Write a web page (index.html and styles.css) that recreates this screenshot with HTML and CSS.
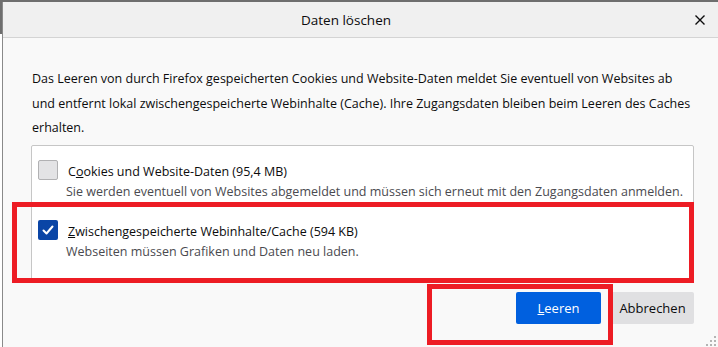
FILE: index.html
```html
<!DOCTYPE html>
<html lang="de">
<head>
    <meta charset="UTF-8">
    <meta name="viewport" content="width=device-width, initial-scale=1.0">
    <title>Daten löschen</title>
    <link rel="stylesheet" href="styles.css">
</head>
<body>

    <div class="screen">
        <!-- page behind the dialog -->
        <div class="behind"></div>

        <div class="dialog">
            <header class="titlebar">
                <span class="title">Daten löschen</span>
                <button class="close" aria-label="Schließen">
                    <svg width="10" height="10" viewBox="0 0 10 10"><path d="M0.5 0.5 L9.5 9.5 M9.5 0.5 L0.5 9.5" stroke="#0c0c0d" stroke-width="1.4" fill="none"/></svg>
                </button>
            </header>

            <div class="content">
                <p class="intro">Das Leeren von durch Firefox gespeicherten Cookies und Website-Daten meldet Sie eventuell von Websites ab<br>und entfernt lokal zwischengespeicherte Webinhalte (Cache). Ihre Zugangsdaten bleiben beim Leeren des Caches<br>erhalten.</p>

                <!-- Options -->
                <div class="listbox">
                    <div class="option">
                        <span class="checkbox"></span>
                        <div class="option-text">
                            <div class="label">C<u>o</u>okies und Website-Daten (95,4 MB)</div>
                            <div class="desc">Sie werden eventuell von Websites abgemeldet und müssen sich erneut mit den Zugangsdaten anmelden.</div>
                        </div>
                    </div>
                    <div class="option">
                        <span class="checkbox checked">
                            <svg width="20" height="20" viewBox="0 0 20 20"><path d="M5.5 10.5 L8.5 13.5 L14.5 6.5" stroke="#fff" stroke-width="2" fill="none" stroke-linecap="round" stroke-linejoin="round"/></svg>
                        </span>
                        <div class="option-text">
                            <div class="label"><u>Z</u>wischengespeicherte Webinhalte/Cache (594 KB)</div>
                            <div class="desc">Webseiten müssen Grafiken und Daten neu laden.</div>
                        </div>
                    </div>
                </div>

                <div class="actions">
                    <button class="btn primary"><u>L</u>eeren</button>
                    <button class="btn">Abbrechen</button>
                </div>
            </div>

            <svg class="grip" width="10" height="10" viewBox="0 0 10 10">
                <rect x="8" y="0" width="2" height="2" fill="#b4b4b4"/>
                <rect x="4" y="4" width="2" height="2" fill="#b4b4b4"/>
                <rect x="8" y="4" width="2" height="2" fill="#b4b4b4"/>
                <rect x="0" y="8" width="2" height="2" fill="#b4b4b4"/>
                <rect x="4" y="8" width="2" height="2" fill="#b4b4b4"/>
                <rect x="8" y="8" width="2" height="2" fill="#b4b4b4"/>
            </svg>
        </div>

        <!-- red annotation frames -->
        <div class="mark mark-option"></div>
        <div class="mark mark-button"></div>
    </div>

</body>
</html>
```

FILE: styles.css
```css
body {
    margin: 0;
    background-color: #fff;
    font-family: "Open Sans", "Noto Sans", sans-serif;
    color: #0c0c0d;
    overflow: hidden;
}
.screen {
    position: relative;
    display: flex;
    width: 718px;
    height: 347px;
    background-color: #6e6e6e;
}
.behind {
    width: 2px;
    background: linear-gradient(#6e6e6e 0, #6e6e6e 34px, #fff 34px);
}
.dialog {
    position: relative;
    flex: 1;
    min-width: 0;
    display: flex;
    flex-direction: column;
    margin-top: 2px;
    border-left: 1px solid #8a8a8a;
    background-color: #f9f9f9;
}
.titlebar {
    display: flex;
    align-items: center;
    height: 35px;
    background-color: #f0f0f0;
    border-bottom: 1px solid #d4d4d4;
}
.title {
    flex: 1;
    text-align: center;
    font-size: 13.5px;
}
.close {
    width: 29px;
    height: 35px;
    padding: 0 0 0 6px;
    border: none;
    background: none;
    text-align: left;
    display: flex;
    align-items: center;
}
.content {
    padding: 0 24px 0 28px;
}
.intro {
    margin: 29px 0 4px 1px;
    font-size: 12.5px;
    line-height: 24.5px;
    white-space: nowrap;
}
.listbox {
    height: 134px;
    background-color: #fff;
    border: 1px solid #c6c6c6;
    border-radius: 2px;
}
.option {
    display: flex;
    gap: 8px;
    padding: 14px 0 4px 6px;
}
.checkbox {
    flex: none;
    width: 18px;
    height: 18px;
    border: 1px solid #b1b1b3;
    border-radius: 2px;
    background-color: #e3e3e5;
}
.checkbox.checked {
    width: 20px;
    height: 20px;
    border: none;
    background-color: #0a45a6;
}
.checkbox svg {
    display: block;
}
.label {
    font-size: 12.5px;
    line-height: 20px;
    padding-top: 2px;
    margin-left: 2px;
}
.desc {
    font-size: 12.5px;
    line-height: 20px;
    color: #4a4a4f;
    white-space: nowrap;
}
.actions {
    display: flex;
    justify-content: flex-end;
    gap: 10px;
    margin-top: 11px;
}
.btn {
    height: 32px;
    min-width: 83px;
    padding: 0 8px;
    border: none;
    border-radius: 2px;
    background-color: #e0e0e2;
    color: #0c0c0d;
    font-family: inherit;
    font-size: 13px;
}
.btn.primary {
    width: 85px;
    background-color: #0060df;
    color: #fff;
}
.grip {
    position: absolute;
    right: 2px;
    bottom: 1px;
}
.mark {
    position: absolute;
    border: 5px solid #ed1c24;
}
.mark-option {
    left: 12px;
    top: 202px;
    width: 672px;
    height: 71px;
}
.mark-button {
    left: 427px;
    top: 284px;
    width: 176px;
    height: 51px;
}
```
